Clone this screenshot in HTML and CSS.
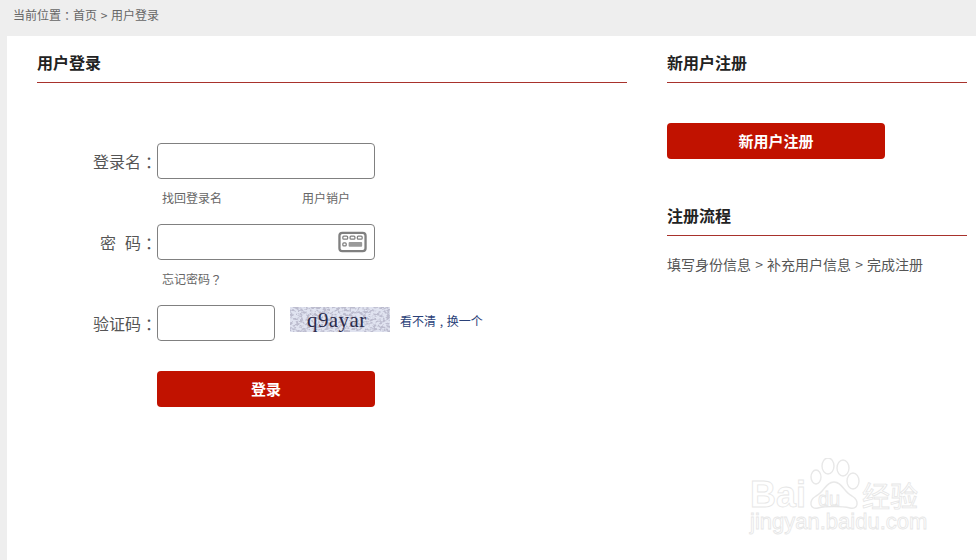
FILE: index.html
```html
<!DOCTYPE html>
<html lang="zh-CN">
<head>
<meta charset="utf-8">
<title>用户登录</title>
<link rel="stylesheet" href="styles.css">
</head>
<body>
<div class="crumb">当前位置<span class="punct" lang="zh-TW">：</span>首页 &gt; 用户登录</div>
<main class="panel">
  <section class="left">
    <h2 class="title">用户登录</h2>
    <form class="form">
      <div class="row">
        <label class="label">登录名<span class="punct" lang="zh-TW">：</span></label>
        <div class="input"></div>
      </div>
      <div class="links">
        <a class="link link-a">找回登录名</a>
        <a class="link">用户销户</a>
      </div>
      <div class="row">
        <label class="label"><span class="spaced">密</span>码<span class="punct" lang="zh-TW">：</span></label>
        <div class="input">
          <svg class="kbd" width="29" height="22" viewBox="0 0 30 22">
            <rect x="1.5" y="1.5" width="27" height="19" rx="3" fill="none" stroke="#808080" stroke-width="2.4"/>
            <g fill="none" stroke="#808080" stroke-width="1.3">
              <rect x="5" y="5" width="5" height="3" rx="1"/>
              <rect x="12.5" y="5" width="5" height="3" rx="1"/>
              <rect x="20" y="5" width="5" height="3" rx="1"/>
              <rect x="5" y="12" width="3.5" height="3" rx="1"/>
            </g>
            <rect x="11" y="11" width="14" height="5" rx="1" fill="#9a9a9a"/>
          </svg>
        </div>
      </div>
      <div class="links">
        <a class="link">忘记密码<span class="punct" lang="zh-TW">？</span></a>
      </div>
      <div class="row">
        <label class="label">验证码<span class="punct" lang="zh-TW">：</span></label>
        <div class="input input-short"></div>
        <div class="captcha">
          <svg class="noise" width="100" height="25" viewBox="0 0 100 25">
            <defs>
              <filter id="grain" x="0" y="0" width="100%" height="100%">
                <feTurbulence type="fractalNoise" baseFrequency="0.3 0.42" numOctaves="2" seed="7"/>
                <feColorMatrix type="matrix" values="0 0 0 0 0.5  0 0 0 0 0.5  0 0 0 0 0.62  4 4 0 0 -3.7"/>
              </filter>
            </defs>
            <rect width="100" height="25" fill="#e0e3f0"/>
            <rect width="100" height="25" filter="url(#grain)"/>
          </svg>
          <span class="captcha-text">q9ayar</span>
        </div>
        <a class="refresh">看不清 , 换一个</a>
      </div>
      <button class="btn btn-login" type="button">登录</button>
    </form>
  </section>
  <aside class="right">
    <h2 class="title">新用户注册</h2>
    <button class="btn btn-reg" type="button">新用户注册</button>
    <h2 class="title">注册流程</h2>
    <p class="flow">填写身份信息 &gt; 补充用户信息 &gt; 完成注册</p>
  </aside>
</main>
<div class="mark">
  <svg class="paw" width="56" height="56" viewBox="0 0 56 56">
    <g fill="#fff" stroke="#e8e8e8" stroke-width="1.4">
      <ellipse cx="8" cy="19" rx="5" ry="7"/>
      <ellipse cx="20" cy="8" rx="6" ry="8"/>
      <ellipse cx="35" cy="10" rx="6" ry="8"/>
      <ellipse cx="45" cy="23" rx="6" ry="8"/>
      <path d="M26 24C34 24 36 34 44 38C52 43 50 52 42 50C34 48 18 48 10 50C2 52 0 43 8 38C16 34 18 24 26 24Z"/>
    </g>
  </svg>
  <span class="mark-bai">Bai</span>
  <span class="mark-du">du</span>
  <span class="mark-jy">经验</span>
  <span class="mark-url">jingyan.baidu.com</span>
</div>
</body>
</html>
```
FILE: styles.css
```css
* { box-sizing: border-box; }
html, body { margin: 0; height: 100%; }
body {
  background: #eee;
  font-family: "Noto Sans CJK SC", "Liberation Sans", sans-serif;
  color: #555;
  overflow: hidden;
  position: relative;
}
.punct { font-family: "Noto Sans CJK TC", sans-serif; vertical-align: -1px; line-height: 1; }
.crumb {
  height: 36px;
  line-height: 29px;
  padding-left: 13px;
  font-size: 12px;
  color: #666;
  word-spacing: 1px;
}
.panel {
  margin-left: 7px;
  height: 524px;
  background: #fff;
  padding-left: 30px;
  display: flex;
  gap: 40px;
}
.left { width: 590px; }
.right { width: 300px; }
.title {
  margin: 0;
  height: 47px;
  line-height: 52px;
  font-size: 16px;
  font-weight: 700;
  color: #222;
  border-bottom: 1px solid #a8322c;
}
.form { padding: 60px 0 0 0; }
.row { display: flex; height: 36px; align-items: center; }
.label {
  width: 120px;
  text-align: right;
  font-size: 16px;
  color: #555;
  white-space: nowrap;
}
.spaced { margin-right: 9px; }
.input {
  width: 218px;
  height: 36px;
  border: 1px solid #808080;
  border-radius: 4px;
  background: #fff;
  display: flex;
  align-items: center;
  justify-content: flex-end;
  padding-right: 7px;
}
.input-short { width: 118px; }
.kbd { display: block; }
.links {
  height: 45px;
  padding: 9px 0 0 125px;
  display: flex;
  font-size: 12px;
  line-height: 20px;
  color: #666;
}
.link-a { width: 140px; }
.captcha {
  position: relative;
  width: 100px;
  height: 25px;
  margin: 0 0 8px 15px;
}
.noise { display: block; }
.captcha-text {
  position: absolute;
  left: 17px;
  top: 0;
  font-family: "Liberation Serif", serif;
  font-size: 21px;
  line-height: 26px;
  color: #2a2a4a;
  letter-spacing: 0.4px;
}
.refresh {
  margin: 0 0 6px 10px;
  font-size: 12px;
  color: #2a4178;
  white-space: nowrap;
  word-spacing: 1px;
}
.btn {
  display: block;
  width: 218px;
  height: 36px;
  border: 0;
  border-radius: 4px;
  background: #c11200;
  color: #fff;
  font-family: inherit;
  font-size: 15px;
  font-weight: 700;
  padding: 0 0 2px;
}
.btn-login { margin: 30px 0 0 120px; }
.btn-reg { margin: 40px 0 30px; }
.flow {
  margin: 18px 0 0;
  font-size: 14px;
  line-height: 20px;
  color: #555;
  white-space: nowrap;
  word-spacing: 1px;
}
.mark {
  position: absolute;
  left: 748px;
  top: 455px;
  width: 180px;
  height: 82px;
  color: #fff;
  -webkit-text-stroke: 0.8px #e6e6e6;
  font-family: "Liberation Sans", sans-serif;
}
.paw { position: absolute; left: 60px; top: 3px; }
.mark-bai { position: absolute; left: 2px; top: 25px; font-size: 36px; line-height: 30px; font-weight: 700; }
.mark-du { position: absolute; left: 70px; top: 33px; font-size: 20px; line-height: 22px; }
.mark-jy { position: absolute; left: 114px; top: 25px; font-size: 28px; line-height: 30px; font-family: "Noto Sans CJK SC", sans-serif; white-space: nowrap; }
.mark-url { position: absolute; left: 2px; top: 57px; font-size: 22px; line-height: 20px; white-space: nowrap; }
```
